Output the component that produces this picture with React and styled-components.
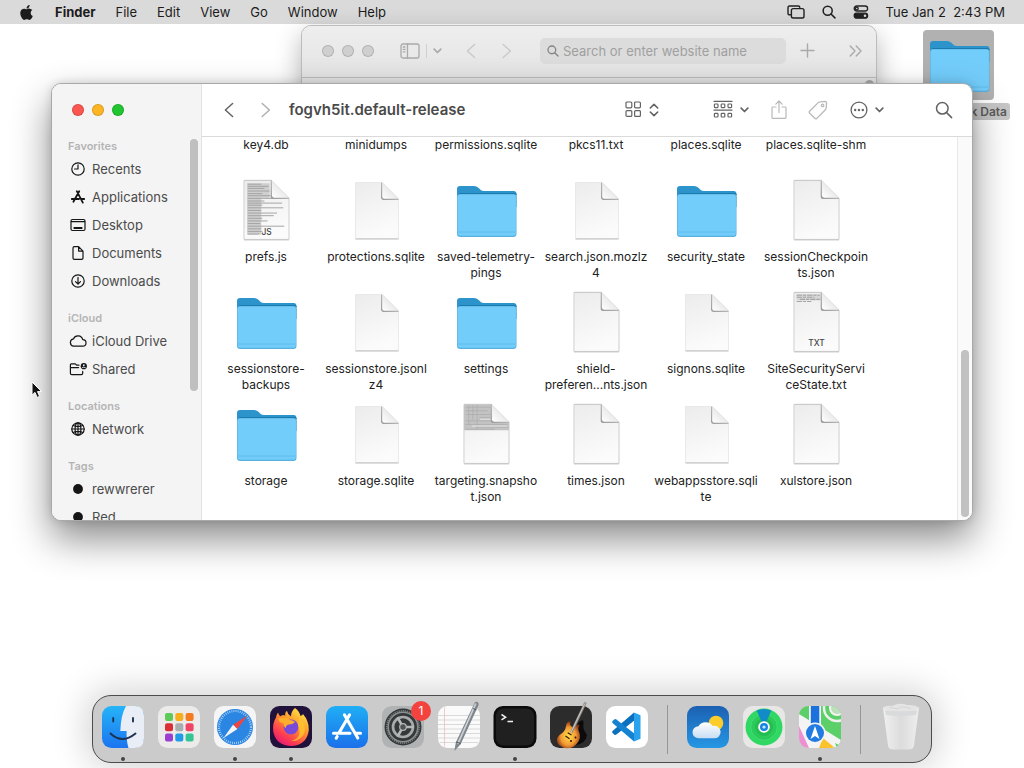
import React from "react";
import styled, { createGlobalStyle } from "styled-components";
import { FaApple } from "react-icons/fa";

const GlobalStyle = createGlobalStyle`
  * {
    box-sizing: border-box;
  }

  body {
    margin: 0;
    background: #fff;
    font-family: Inter, "Liberation Sans", sans-serif;
    font-size: 13px;
    color: #222;
  }

  button,
  input {
    font: inherit;
    color: inherit;
    border: 0;
    padding: 0;
    background: none;
  }

  svg {
    display: block;
    flex-shrink: 0;
  }
`;

const Desktop = styled.div`
  position: relative;
  display: flex;
  flex-direction: column;
  height: 100vh;
  min-height: 640px;
  overflow: hidden;
`;

/* menu bar */

const MenuBar = styled.header`
  display: flex;
  align-items: center;
  justify-content: space-between;
  height: 24px;
  padding: 0 19px 0 18px;
  background: #dadada;
`;

const Menus = styled.nav`
  display: flex;
  align-items: center;
  gap: 20px;
`;

const MenuButton = styled.button`
  color: #1c1c1c;
  font-weight: ${(p) => (p.$bold ? 700 : 400)};
  line-height: 24px;
  white-space: pre;
`;

const Status = styled.div`
  display: flex;
  align-items: center;
  gap: 17px;
`;

/* windows */

const Workspace = styled.main`
  position: relative;
  flex: 1;
`;

const Window = styled.section`
  position: absolute;
  border: 1px solid #a9a9a9;
  border-radius: 10px;
  overflow: hidden;
`;

const BrowserWindow = styled(Window)`
  top: 1px;
  left: 301px;
  right: 147px;
  background: #e8e8e8;
  border-color: #bcbcbc;
  box-shadow: 0 10px 26px rgba(0, 0, 0, 0.3);
`;

const BrowserBar = styled.div`
  display: flex;
  align-items: center;
  height: 52px;
  padding: 0 14px 2px 20px;
  color: #a9a9a9;
  background: linear-gradient(#eeeeee, #e4e4e4);
  border-bottom: 1px solid #bdbdbd;
`;

const BrowserPage = styled.div`
  display: flex;
  justify-content: flex-end;
  height: 180px;
  padding: 2px 2px 0;
`;

const BrowserThumb = styled.div`
  width: 9px;
  height: 80px;
  border-radius: 5px;
  background: #aaa;
`;

const SearchField = styled.label`
  display: flex;
  flex: 1;
  align-items: center;
  gap: 4px;
  height: 26px;
  margin: 0 14px 0 28px;
  padding: 0 7px;
  border-radius: 5px;
  background: #dcdcdc;
  color: #858585;

  input {
    flex: 1;
    min-width: 0;
    outline: 0;
  }

  input::placeholder {
    color: #a0a0a0;
    opacity: 1;
  }
`;

const Lights = styled.div`
  display: flex;
  gap: 8px;
`;

const Light = styled.button`
  width: 12px;
  height: 12px;
  border-radius: 50%;
  background: ${(p) => p.$color};
  box-shadow: inset 0 0 0 1px rgba(0, 0, 0, 0.14);
`;

const IconButton = styled.button`
  display: flex;
  align-items: center;
  gap: ${(p) => p.$gap || 0}px;
  margin-left: ${(p) => p.$before || 0}px;
  color: ${(p) => p.$color || "inherit"};
`;

const FinderWindow = styled(Window)`
  top: 59px;
  left: 51px;
  right: 51px;
  display: flex;
  background: #fff;
  box-shadow: 0 18px 38px rgba(0, 0, 0, 0.46), 0 0 10px rgba(0, 0, 0, 0.14);
`;

const Sidebar = styled.aside`
  position: relative;
  flex: 0 0 150px;
  contain: size;
  overflow: hidden;
  padding: 20px 0 0 16px;
  background: #f4f4f4;
  border-right: 1px solid #e2e2e2;

  ${Lights} {
    height: 20px;
    padding-left: 4px;
  }
`;

const SidebarHeading = styled.h2`
  height: 32px;
  margin: 0;
  padding-top: 14px;
  font-size: 11px;
  font-weight: 600;
  line-height: 16px;
  color: #b4b4b4;
`;

const SidebarItem = styled.a`
  display: flex;
  align-items: center;
  gap: 4px;
  height: 28px;
  padding-bottom: 2px;
  color: #4b4b4b;
  text-decoration: none;

  svg {
    color: #151515;
  }
`;

const SidebarThumb = styled.div`
  position: absolute;
  top: 55px;
  right: 3px;
  width: 8px;
  height: 252px;
  border-radius: 4px;
  background: #bfbfbf;
`;

const FinderMain = styled.div`
  display: flex;
  flex: 1;
  flex-direction: column;
  min-width: 0;
`;

const FinderBar = styled.div`
  display: flex;
  align-items: center;
  height: 53px;
  padding: 0 19px 1px 18px;
  color: #636363;
  border-bottom: 1px solid #dadada;

  h1 {
    flex: 1;
    margin: 0 0 0 18px;
    font-size: 15px;
    font-weight: 600;
    color: #4a4a4a;
    white-space: nowrap;
  }
`;

const Pane = styled.div`
  display: flex;
  justify-content: space-between;
`;

const FileGrid = styled.div`
  display: grid;
  flex: 1;
  grid-template-columns: repeat(auto-fill, 110px);
  row-gap: 8px;
  padding: 0 0 15px 9px;
`;

const File = styled.figure`
  display: flex;
  flex-direction: column;
  align-items: center;
  gap: 8px;
  margin: 0;

  figcaption {
    height: 32px;
    font-size: 12px;
    line-height: 16px;
    text-align: center;
    white-space: pre-line;
    color: #222;
  }
`;

const Track = styled.div`
  display: flex;
  flex: 0 0 15px;
  flex-direction: column;
  justify-content: flex-end;
  padding: 0 3px 3px;
  background: #fafafa;
  border-left: 1px solid #e8e8e8;
`;

const TrackThumb = styled.div`
  height: 44%;
  border-radius: 4px;
  background: #c1c1c1;
`;

const DesktopItem = styled.div`
  position: absolute;
  top: 6px;
  right: 14px;
  display: flex;
  flex-direction: column;
  align-items: center;
  gap: 3px;
`;

const DesktopIcon = styled.div`
  padding: 2px 3px 4px 4px;
  border-radius: 4px;
  background: #b1b1b1;
`;

const DesktopLabel = styled.span`
  width: 104px;
  padding: 0 3px;
  border-radius: 3px;
  background: #c6c6c6;
  color: #5c5c5c;
  font-size: 12px;
  font-weight: 600;
  line-height: 17px;
  text-align: right;
`;

const Pointer = styled.svg`
  position: absolute;
  top: 357px;
  left: 31px;
`;

/* dock */

const DockArea = styled.footer`
  display: flex;
  justify-content: center;
  padding-bottom: 5px;
`;

const DockBar = styled.div`
  display: flex;
  padding: 0 2px;
  border: 1px solid #4c4c4c;
  border-radius: 19px;
  background: #cbcbcb;
  box-shadow: 0 0 34px 6px rgba(0, 0, 0, 0.17);
`;

const DockItem = styled.button`
  position: relative;
  display: flex;
  flex-direction: column;
  align-items: center;
  gap: 9px;
  width: 56px;
  padding: 10px 0 1px;

  &::after {
    content: "";
    width: 4px;
    height: 4px;
    border-radius: 50%;
    background: ${(p) => (p.$running ? "#444" : "transparent")};
  }
`;

const Badge = styled.span`
  position: absolute;
  top: 5px;
  right: 0;
  width: 20px;
  border-radius: 50%;
  background: #f4433f;
  color: #fff;
  font-size: 12px;
  line-height: 20px;
  text-align: center;
`;

const Divider = styled.div`
  width: 1px;
  margin: 9px 12px 8px;
  background: #969696;
`;

const Line = ({ w = 16, h = w, sw = 1.3, children, ...rest }) => (
  <svg
    width={w}
    height={h}
    viewBox={`0 0 ${w} ${h}`}
    fill="none"
    stroke="currentColor"
    strokeWidth={sw}
    strokeLinecap="round"
    strokeLinejoin="round"
    aria-hidden="true"
    {...rest}
  >
    {children}
  </svg>
);

const Magnifier = ({ size = 18, sw = 1.5 }) => (
  <Line w={18} sw={sw} width={size} height={size}>
    <circle cx="7.3" cy="7.3" r="5.8" />
    <path d="M11.6 11.6 16.6 16.6" />
  </Line>
);

const ChevronDown = () => (
  <Line w={9} h={6} sw={1.7}>
    <path d="M1.2 1.2 4.5 4.5 7.8 1.2" />
  </Line>
);

const Arrow = ({ next }) => (
  <Line w={10} h={16} sw={1.5}>
    <path d={next ? "M1.2 1.5 8.4 8 1.2 14.5" : "M8.6 1.5 1.4 8 8.6 14.5"} />
  </Line>
);

const SideIcon = ({ name }) => {
  const paths = {
    recents: (
      <>
        <circle cx="10" cy="10" r="6.2" />
        <path d="M10 5.8V10H6.6" />
      </>
    ),
    applications: (
      <path
        strokeWidth="1.8"
        d="M8.8 4.2 14.8 15.6M11.2 4.2 5.4 14.8M3.8 12H11M13.2 12H16.2"
      />
    ),
    desktop: (
      <>
        <rect x="3" y="4.5" width="14" height="11" rx="1.5" />
        <path d="M3.4 6.7H16.6" />
        <path strokeWidth="2" d="M6.4 12.9H13.6" />
      </>
    ),
    documents: (
      <path d="M10.6 3.6H6.4Q5 3.6 5 5V15Q5 16.4 6.4 16.4H13.6Q15 16.4 15 15V8.1ZM10.6 3.8V8.1H14.8" />
    ),
    downloads: (
      <>
        <circle cx="10" cy="10" r="6.2" />
        <path d="M10 6.4V13M7.5 10.7 10 13.2 12.5 10.7" />
      </>
    ),
    cloud: (
      <path d="M5.6 15.2H14.6A3.3 3.3 0 0 0 14.8 8.6A5 5 0 0 0 5.4 7.9A3.7 3.7 0 0 0 5.6 15.2Z" />
    ),
    shared: (
      <>
        <path d="M11 6.2H8.6L7.3 4.8H3.3Q2.4 4.8 2.4 5.8V14.2Q2.4 15.6 3.8 15.6H13.3Q14.7 15.6 14.7 14.2V12.4M2.6 8.6H10.6" />
        <circle cx="15.8" cy="7.2" r="3.1" fill="#151515" stroke="none" />
        <circle cx="15.8" cy="6.2" r="0.9" fill="#f4f4f4" stroke="none" />
        <path d="M14.2 8.6Q15.8 7.2 17.4 8.6" stroke="#f4f4f4" strokeWidth="0.9" />
      </>
    ),
    network: (
      <>
        <circle cx="10" cy="10" r="6.2" />
        <ellipse cx="10" cy="10" rx="2.9" ry="6.2" />
        <path d="M10 3.8V16.2M3.8 10H16.2M5.2 6.5Q10 8.6 14.8 6.5M5.2 13.5Q10 11.4 14.8 13.5" />
      </>
    ),
    tag: <circle cx="10" cy="10" r="4.9" fill="currentColor" stroke="none" />,
  };
  return <Line w={20} sw={1.2}>{paths[name]}</Line>;
};

const Folder = () => (
  <svg width="64" height="64" viewBox="0 0 64 64" aria-hidden="true">
    <path
      d="M3 14V12Q3 9 6 9H20Q22.5 9 24.4 10.8L27 13.2Q28 14 30 14H59.5Q62.5 14 62.5 17V30H3Z"
      fill="#2d94cb"
    />
    <path d="M5 17.2Q5 16.5 6 16.5H61Q62 16.5 62.4 18" stroke="#1a79ad" fill="none" />
    <rect x="3" y="17" width="59.5" height="43" rx="3.2" fill="#5ab0dc" />
    <rect x="3.6" y="17.6" width="58.3" height="41.2" rx="2.8" fill="#73cdfb" />
    <path d="M4 55H61.5" stroke="#5bb8ea" strokeWidth="0.8" />
  </svg>
);

const Doc = ({ kind }) => {
  const plain = kind === "plain";
  const code = kind === "js";
  return (
    <svg width="64" height="64" viewBox="0 0 64 64" aria-hidden="true">
      <defs>
        <linearGradient id="paper" x1="0" y1="0" x2="0.3" y2="1">
          <stop offset="0" stopColor="#ececec" />
          <stop offset="1" stopColor="#fbfbfb" />
        </linearGradient>
        <linearGradient id="fold" x1="0" y1="1" x2="1" y2="0">
          <stop offset="0" stopColor="#fff" />
          <stop offset="0.6" stopColor="#e6e6e6" />
        </linearGradient>
        <linearGradient id="crease" x1="1" y1="0" x2="0" y2="1">
          <stop offset="0.2" stopColor="#c8c8c8" />
          <stop offset="1" stopColor="#989898" />
        </linearGradient>
      </defs>
      <g transform={plain ? "translate(11 5)" : "translate(9.5 3) scale(1.045 1.05)"}>
        <path
          d="M0.5 0.5H27L43.5 17V56.5H0.5Z"
          fill="url(#paper)"
          stroke="#e4e4e4"
          strokeWidth="0.8"
        />
        <path d="M0.5 57H43.5" stroke="#b5b5b5" strokeWidth="0.9" />
        {!plain && (
          <>
            <path d="M0.5 0.3H27" stroke="#bdbdbd" strokeWidth="0.8" />
            <path d="M0.4 0.5V56.5M43.6 17V56.5" stroke="#d0d0d0" strokeWidth="0.7" />
          </>
        )}
        {code && (
          <>
            <path d="M3.5 3H25V17H17V52H3.5Z" fill="#cfcfcf" />
            <path
              d="M4 4H17M4 6H24M4 8H20M4 10.5H25M4 13H18M4 15H26M4 17.5H31M4 20H20M4 22H37M4 24H18M4 26.5H38M4 29H17M4 31.5H32M4 34H29M4 36.5H18M4 39H23M4 41.5H16M4 44H39M4 46.5H17M4 49H18M4 51.5H15"
              stroke="#a0a0a0"
              strokeWidth="0.9"
            />
          </>
        )}
        {kind === "snapshot" && (
          <>
            <path d="M0.5 0.5H27V17H43.5V25H0.5Z" fill="#c3c3c3" />
            <path
              d="M2 3H26M2 6.5H23M2 10H26M15 13H26M2 16H26M2 19.5H42M12 22H43M2 24H30M5 1V20M9 1V15M13 1V24"
              stroke="#adadad"
              strokeWidth="0.8"
            />
            <path d="M16 14.5H27M8 21H42" stroke="#eee" strokeWidth="0.8" />
          </>
        )}
        {kind === "txt" && (
          <>
            <path d="M3 2H26V8H3Z" fill="#d6d6d6" />
            <path
              d="M3 3H25M3 5H20M6 7H28M3 9H17"
              stroke="#a5a5a5"
              strokeWidth="1"
              strokeDasharray="5 1 3 1"
            />
          </>
        )}
        <path d="M26 0.5H27L43.5 16.8V18H28.4Q26 18 26 15.6Z" fill="url(#crease)" />
        <path d="M27.2 0.5 43.5 16.8H29.4Q27.2 16.8 27.2 14.6Z" fill="url(#fold)" />
        {(code || kind === "txt") && (
          <text
            x="22"
            y={code ? 52 : 51}
            textAnchor="middle"
            fontSize="8"
            fontWeight="500"
            fill="#444"
          >
            {code ? "JS" : "TXT"}
          </text>
        )}
      </g>
    </svg>
  );
};

const Tile = ({ children }) => (
  <svg width="42" height="42" viewBox="0 0 42 42" overflow="visible" aria-hidden="true">
    {children}
  </svg>
);

const FinderIcon = () => (
  <Tile>
    <defs>
      <linearGradient id="finderBlue" x1="0" y1="0" x2="0" y2="1">
        <stop offset="0" stopColor="#26b4f8" />
        <stop offset="1" stopColor="#1b74f0" />
      </linearGradient>
    </defs>
    <rect width="42" height="42" rx="9.5" fill="url(#finderBlue)" />
    <path
      d="M24 0H32.5Q42 0 42 9.5V32.5Q42 42 32.5 42H26.5Q24.3 35 24.6 25H18.3Q18.8 9 24 0Z"
      fill="#e9edf5"
    />
    <path d="M11.2 12V15.5M31 12V15.5" stroke="#1c3350" strokeWidth="1.9" strokeLinecap="round" />
    <path
      d="M8.5 27.5Q20 38.5 33.5 27.5"
      fill="none"
      stroke="#1c3350"
      strokeWidth="1.9"
      strokeLinecap="round"
    />
  </Tile>
);

const pads = [
  "#5fca58", "#f6ae1c", "#f47b20",
  "#da2f35", "#a9acb0", "#ef4466",
  "#9a3fd0", "#1f9be8", "#34c596",
];

const LaunchpadIcon = () => (
  <Tile>
    <rect width="42" height="42" rx="9.5" fill="#ecebea" />
    {pads.map((c, i) => (
      <rect
        key={c}
        x={7 + (i % 3) * 10.3}
        y={7 + Math.floor(i / 3) * 10.3}
        width="8"
        height="8"
        rx="2"
        fill={c}
      />
    ))}
  </Tile>
);

const SafariIcon = () => (
  <Tile>
    <rect width="42" height="42" rx="9.5" fill="#f5f5f5" />
    <circle cx="21" cy="21" r="18" fill="#2a86e2" />
    <circle
      cx="21"
      cy="21"
      r="16"
      fill="none"
      stroke="#d4e8fb"
      strokeWidth="2.2"
      strokeDasharray="0.7 1.4"
    />
    <path d="M33.5 9.5 23.4 23 19 18.8Z" fill="#f0443f" />
    <path d="M9.3 32.2 19 18.8 23.4 23Z" fill="#f4f4f4" />
  </Tile>
);

const FirefoxIcon = () => (
  <Tile>
    <defs>
      <linearGradient id="foxFire" x1="0.85" y1="0" x2="0.2" y2="1">
        <stop offset="0" stopColor="#fff04a" />
        <stop offset="0.4" stopColor="#ff9a2c" />
        <stop offset="0.75" stopColor="#ff3d50" />
        <stop offset="1" stopColor="#e3147c" />
      </linearGradient>
    </defs>
    <rect width="42" height="42" rx="9.5" fill="#20123a" />
    <path
      d="M25 2Q29 4.7 30.5 10Q33 9 33 8Q39 15 38.8 23.5Q37.5 38.5 22 40Q5.5 39.8 3.2 25Q2.4 17 6 11.5Q6.3 8.8 8 6.5Q8.8 9 10.3 10.2Q14 8 15.2 10Q14.8 5.8 17 5Q17.8 8.8 21 10.5Q21 5 25 2Z"
      fill="url(#foxFire)"
    />
    <circle cx="21" cy="21" r="7.4" fill="#7b49d8" />
    <path
      d="M8.2 12.5Q15 10 20 14Q24 14.4 25 16.2Q22 18.7 18.7 18.5Q15.5 19 16 22Q13.2 21 13.8 17.5Q9 16.8 8.2 12.5Z"
      fill="#ffad2d"
    />
    <path d="M29.5 12Q37 19 34 28Q29 36 21 35Q33 32 28 19Z" fill="#ffc62e" opacity="0.8" />
  </Tile>
);

const AppStoreIcon = () => (
  <Tile>
    <defs>
      <linearGradient id="storeBlue" x1="0" y1="0" x2="0" y2="1">
        <stop offset="0" stopColor="#20aef5" />
        <stop offset="1" stopColor="#1b70ea" />
      </linearGradient>
    </defs>
    <rect width="42" height="42" rx="9.5" fill="url(#storeBlue)" />
    <path
      d="M18.4 8.8 31.8 32M23.6 8.8 12.8 27.2M7.5 27.2H24M30 27.2H34.5M11.2 30.5 10.2 32.2"
      stroke="#fff"
      strokeWidth="3.1"
      strokeLinecap="round"
    />
  </Tile>
);

const SettingsIcon = () => (
  <Tile>
    <rect width="42" height="42" rx="9.5" fill="#b0b3b4" />
    <circle cx="21" cy="21" r="18.5" fill="#35383a" />
    <circle
      cx="21"
      cy="21"
      r="16.2"
      fill="none"
      stroke="#787c7d"
      strokeWidth="1.6"
      strokeDasharray="1.2 0.9"
    />
    <circle cx="21" cy="21" r="14.8" fill="none" stroke="#8b8f90" strokeWidth="1.6" />
    <circle cx="21" cy="21" r="10" fill="none" stroke="#a7abac" strokeWidth="2.7" />
    <path
      d="M21 21H32M21 21 15.5 11.4M21 21 15.5 30.6"
      stroke="#b5b8b9"
      strokeWidth="2.6"
    />
    <circle cx="21" cy="21" r="3.3" fill="#505456" stroke="#b5b8b9" strokeWidth="1.2" />
  </Tile>
);

const TextEditIcon = () => (
  <Tile>
    <rect width="42" height="42" rx="9.5" fill="#fafafa" />
    <path
      d="M0 9.5H42M0 14H42M0 18.5H42M0 23H42M0 27.5H42M0 32H42M2 36.5H40"
      stroke="#d2d2d2"
      strokeWidth="0.8"
    />
    <path d="M6.5 1.5V40.5" stroke="#efbcbc" strokeWidth="0.8" />
    <path d="M37 -4Q41 -5 40.6 -1L22.5 38.5 16.4 45 17.8 36.5Z" fill="#7f868c" />
    <path d="M37.8 -2.5 19.8 37.8" stroke="#ccd2d6" strokeWidth="1.7" />
    <path d="M38.3 4 35.2 2.5M22.5 37.5 18.2 36" stroke="#4e555b" strokeWidth="1" />
  </Tile>
);

const TerminalIcon = () => (
  <Tile>
    <rect x="-0.5" y="0" width="43" height="42" rx="9.5" fill="#0b0b0b" />
    <rect x="2" y="2.4" width="38" height="37" rx="7.5" fill="#202020" />
    <path d="M7.5 8.5 11.6 11.2 7.5 13.9M13.5 15.6H19" fill="none" stroke="#f1f1f1" strokeWidth="1.5" />
  </Tile>
);

const GarageBandIcon = () => (
  <Tile>
    <defs>
      <radialGradient id="guitar" cx="0.5" cy="0.55" r="0.55">
        <stop offset="0" stopColor="#ffdf48" />
        <stop offset="0.6" stopColor="#f39a35" />
        <stop offset="1" stopColor="#8a3413" />
      </radialGradient>
    </defs>
    <rect width="42" height="42" rx="9.5" fill="#2c2c2c" />
    <path d="M28 17Q34 11 33.5 18Q32 22 37 29Q36 37 26 39Z" fill="#0b0b0b" />
    <path
      d="M16 20Q16.5 15 20.5 15.5Q18.7 20 24 22Q26 18 29.5 19Q27 22 29.8 28Q31.2 35.5 23 41Q16 44.5 9 39Q4.5 34 9.5 29Q15.5 25.5 16 20Z"
      fill="url(#guitar)"
    />
    <path d="M21.3 26.5 35.5 -3.5" stroke="#8f8b86" strokeWidth="2.6" />
    <path d="M21 26.5 34.8 -2.5" stroke="#ded8d0" strokeWidth="0.8" />
    <path d="M15.5 30 19.5 32.8M17.7 26.8 21.5 29" stroke="#35180c" strokeWidth="1.2" />
    <circle cx="21" cy="35" r="1" fill="#2b140a" />
    <circle cx="25.5" cy="31.5" r="1" fill="#2b140a" />
  </Tile>
);

const CodeIcon = () => (
  <Tile>
    <rect width="42" height="42" rx="9.5" fill="#fff" />
    <path d="M28 6.5 34.5 9.2V32.8L28 35.5Z" fill="#2aa2ee" />
    <path d="M28 6.5 6.5 25Q5.7 26 6.5 27L8.5 28.8Q9.4 29.3 10.4 28.6L28 14.8Z" fill="#0b70bd" />
    <path d="M28 35.5 6.5 17Q5.7 16 6.5 15L8.5 13.2Q9.4 12.7 10.4 13.4L28 27.2Z" fill="#1683d2" />
  </Tile>
);

const WeatherIcon = () => (
  <Tile>
    <defs>
      <linearGradient id="sky" x1="0" y1="0" x2="0" y2="1">
        <stop offset="0" stopColor="#1c60b2" />
        <stop offset="1" stopColor="#2597e4" />
      </linearGradient>
      <linearGradient id="cloud" x1="0" y1="0" x2="0" y2="1">
        <stop offset="0" stopColor="#fff" />
        <stop offset="1" stopColor="#c7ddf3" />
      </linearGradient>
    </defs>
    <rect width="42" height="42" rx="9.5" fill="url(#sky)" />
    <circle cx="29" cy="17" r="7.3" fill="#fccc2b" />
    <path
      d="M11.5 32.3A6 6 0 0 1 11.5 20.3A8.2 8.2 0 0 1 25.6 20A6.3 6.3 0 1 1 26.5 32.3Z"
      fill="url(#cloud)"
    />
  </Tile>
);

const FindMyIcon = () => (
  <Tile>
    <rect width="42" height="42" rx="9.5" fill="#e9e7e5" />
    <circle cx="21" cy="21" r="18.5" fill="#2fd763" />
    <circle cx="21" cy="21" r="13.3" fill="#2acb5b" stroke="#48de76" strokeWidth="0.8" />
    <circle cx="21" cy="21" r="9" fill="#24bd51" />
    <path d="M21 21 13.7 4.5Q21 1.5 28.3 4.5Z" fill="#128cc9" />
    <circle cx="21" cy="21" r="5.8" fill="#fff" />
    <circle cx="21" cy="21" r="4" fill="#1684e5" />
    <circle cx="21" cy="21" r="1.6" fill="#cfe6fb" />
  </Tile>
);

const MapsIcon = () => (
  <Tile>
    <defs>
      <clipPath id="mapTile">
        <rect width="42" height="42" rx="9.5" />
      </clipPath>
    </defs>
    <g clipPath="url(#mapTile)">
      <rect width="42" height="42" fill="#5cd068" />
      <circle cx="38" cy="2" r="13" fill="none" stroke="#eef0ed" strokeWidth="2.5" />
      <circle cx="38" cy="2" r="7" fill="#bedfba" stroke="#f2f4f2" strokeWidth="2" />
      <path d="M0 8 42 34V42H0Z" fill="#f4f4f4" />
      <path d="M0 20 10 42H0Z" fill="#ed8fd0" />
      <path d="M24 32 36 42H20Z" fill="#fac32d" />
      <path d="M36 37 42 40V42H38Z" fill="#5cd068" />
      <path d="M10 -1H22V20H10Z" fill="#f4f4f4" />
      <path d="M11.8 -1H20.3V20H11.8Z" fill="#1c72dd" />
    </g>
    <circle cx="16" cy="27" r="10.6" fill="#f4f4f4" />
    <circle cx="16" cy="27" r="9" fill="#217be1" />
    <path d="M16 20 20.5 33 16 30 11.5 33Z" fill="#fff" />
  </Tile>
);

const TrashIcon = () => (
  <Tile>
    <defs>
      <linearGradient id="bin" x1="0" y1="0" x2="1" y2="0">
        <stop offset="0" stopColor="#f0f0f0" />
        <stop offset="0.5" stopColor="#dcdcdc" />
        <stop offset="1" stopColor="#eeeeee" />
      </linearGradient>
    </defs>
    <path d="M3 1.5H39L34 39.5Q33.5 43.5 29 43.5H13Q8.5 43.5 8 39.5Z" fill="url(#bin)" />
    <path d="M5 4.5H37L36 9Q21 11 6 9Z" fill="#d8dadb" />
    <path d="M3 2Q5 -1 12 0Q20 -4 27 -1Q36 -1.5 39 2Q37 5 21 5.2Q5 5 3 2Z" fill="#e4e4e4" />
    <path d="M10 1.5 17 2.8 23 0.7 31 2.5" fill="none" stroke="#cfd0d1" strokeWidth="0.8" />
  </Tile>
);

const sections = [
  {
    title: "Favorites",
    items: [
      ["recents", "Recents"],
      ["applications", "Applications"],
      ["desktop", "Desktop"],
      ["documents", "Documents"],
      ["downloads", "Downloads"],
    ],
  },
  {
    title: "iCloud",
    items: [
      ["cloud", "iCloud Drive"],
      ["shared", "Shared"],
    ],
  },
  { title: "Locations", items: [["network", "Network"]] },
  {
    title: "Tags",
    items: [
      ["tag", "rewwrerer"],
      ["tag", "Red"],
    ],
  },
];

const files = [
  [null, "key4.db"],
  [null, "minidumps"],
  [null, "permissions.sqlite"],
  [null, "pkcs11.txt"],
  [null, "places.sqlite"],
  [null, "places.sqlite-shm"],
  ["js", "prefs.js"],
  ["plain", "protections.sqlite"],
  ["folder", "saved-telemetry-\npings"],
  ["plain", "search.json.mozlz\n4"],
  ["folder", "security_state"],
  ["json", "sessionCheckpoin\nts.json"],
  ["folder", "sessionstore-\nbackups"],
  ["plain", "sessionstore.jsonl\nz4"],
  ["folder", "settings"],
  ["json", "shield-\npreferen...nts.json"],
  ["plain", "signons.sqlite"],
  ["txt", "SiteSecurityServi\nceState.txt"],
  ["folder", "storage"],
  ["plain", "storage.sqlite"],
  ["snapshot", "targeting.snapsho\nt.json"],
  ["json", "times.json"],
  ["plain", "webappsstore.sqli\nte"],
  ["json", "xulstore.json"],
];

const dock = [
  { name: "Finder", Icon: FinderIcon, running: true },
  { name: "Launchpad", Icon: LaunchpadIcon },
  { name: "Safari", Icon: SafariIcon, running: true },
  { name: "Firefox", Icon: FirefoxIcon, running: true },
  { name: "App Store", Icon: AppStoreIcon },
  { name: "System Settings", Icon: SettingsIcon, badge: 1 },
  { name: "TextEdit", Icon: TextEditIcon },
  { name: "Terminal", Icon: TerminalIcon, running: true },
  { name: "GarageBand", Icon: GarageBandIcon },
  { name: "Visual Studio Code", Icon: CodeIcon },
  { divider: true },
  { name: "Weather", Icon: WeatherIcon },
  { name: "Find My", Icon: FindMyIcon },
  { name: "Maps", Icon: MapsIcon, running: true },
  { divider: true },
  { name: "Trash", Icon: TrashIcon },
];

const TopMenu = () => (
  <MenuBar>
    <Menus>
      <MenuButton aria-label="Apple">
        <FaApple size={17} />
      </MenuButton>
      <MenuButton $bold>Finder</MenuButton>
      {["File", "Edit", "View", "Go", "Window", "Help"].map((m) => (
        <MenuButton key={m}>{m}</MenuButton>
      ))}
    </Menus>
    <Status>
      <IconButton aria-label="Stage Manager" $color="#222">
        <Line w={18} h={14} sw={1.4}>
          <path d="M3.4 9.8H2.6Q1 9.8 1 8.2V2.6Q1 1 2.6 1H11.2Q12.8 1 12.8 2.4" />
          <rect x="4.4" y="3.6" width="12.6" height="9.4" rx="1.8" />
        </Line>
      </IconButton>
      <IconButton aria-label="Spotlight" $color="#222">
        <Magnifier size={14} sw={2} />
      </IconButton>
      <IconButton aria-label="Control Center" $color="#222">
        <Line w={16} h={14} sw={1.3}>
          <rect x="1.2" y="1" width="13.4" height="5" rx="2.5" />
          <circle cx="3.8" cy="3.5" r="1.4" />
          <rect x="1.2" y="8.2" width="13.4" height="5" rx="2.5" fill="currentColor" />
          <circle cx="12" cy="10.7" r="1.3" fill="#dadada" stroke="none" />
        </Line>
      </IconButton>
      <MenuButton>{"Tue Jan 2  2:43 PM"}</MenuButton>
    </Status>
  </MenuBar>
);

const Browser = () => (
  <BrowserWindow>
    <BrowserBar>
      <Lights>
        {["Close", "Minimize", "Zoom"].map((n) => (
          <Light key={n} aria-label={n} $color="#cfcfcf" />
        ))}
      </Lights>
      <IconButton aria-label="Show sidebar" $before={26} $gap={6}>
        <Line w={20} h={16} sw={1.3}>
          <rect x="1" y="1" width="18" height="14" rx="2" />
          <path d="M7.5 1V15M3.2 4H5M3.2 6.4H5M3.2 8.8H5" />
        </Line>
        <Line w={1} h={14} sw={1}>
          <path d="M0.5 0V14" opacity="0.4" />
        </Line>
        <ChevronDown />
      </IconButton>
      <IconButton aria-label="Back" $before={24} $color="#cacaca">
        <Arrow />
      </IconButton>
      <IconButton aria-label="Forward" $before={26} $color="#cacaca">
        <Arrow next />
      </IconButton>
      <SearchField>
        <Magnifier size={12} sw={2} />
        <input aria-label="Address" placeholder="Search or enter website name" />
      </SearchField>
      <IconButton aria-label="New tab">
        <Line w={15} sw={1.4}>
          <path d="M7.5 1V14M1 7.5H14" />
        </Line>
      </IconButton>
      <IconButton aria-label="More" $before={34}>
        <Line w={13} h={12} sw={1.4}>
          <path d="M1.2 1 6 6 1.2 11M7.2 1 12 6 7.2 11" />
        </Line>
      </IconButton>
    </BrowserBar>
    <BrowserPage>
      <BrowserThumb />
    </BrowserPage>
  </BrowserWindow>
);

const Finder = () => (
  <FinderWindow>
    <Sidebar>
      <Lights>
        <Light aria-label="Close" $color="#fb5750" />
        <Light aria-label="Minimize" $color="#fdb524" />
        <Light aria-label="Zoom" $color="#20c52f" />
      </Lights>
      {sections.map((s) => (
        <nav key={s.title} aria-label={s.title}>
          <SidebarHeading>{s.title}</SidebarHeading>
          {s.items.map(([icon, label]) => (
            <SidebarItem key={label} href="#">
              <SideIcon name={icon} />
              {label}
            </SidebarItem>
          ))}
        </nav>
      ))}
      <SidebarThumb />
    </Sidebar>
    <FinderMain>
      <FinderBar>
        <IconButton aria-label="Back" $before={4}>
          <Arrow />
        </IconButton>
        <IconButton aria-label="Forward" $before={27} $color="#b0b0b0">
          <Arrow next />
        </IconButton>
        <h1>fogvh5it.default-release</h1>
        <IconButton aria-label="View as icons" $gap={7}>
          <Line w={17} sw={1.2}>
            <rect x="1" y="1" width="5.8" height="5.8" rx="1" />
            <rect x="9.6" y="1" width="5.8" height="5.8" rx="1" />
            <rect x="1" y="9.6" width="5.8" height="5.8" rx="1" />
            <rect x="9.6" y="9.6" width="5.8" height="5.8" rx="1" />
          </Line>
          <Line w={10} h={14} sw={1.6}>
            <path d="M1.3 5 5 1.4 8.7 5M1.3 9 5 12.6 8.7 9" />
          </Line>
        </IconButton>
        <IconButton aria-label="Group" $before={54} $gap={7}>
          <Line w={20} h={19} sw={1.2}>
            <path d="M1 1.4H19M1 10.2H19" />
            <rect x="1.4" y="4" width="3.6" height="3.6" rx="0.8" />
            <rect x="8.2" y="4" width="3.6" height="3.6" rx="0.8" />
            <rect x="15" y="4" width="3.6" height="3.6" rx="0.8" />
            <rect x="1.4" y="13.4" width="3.6" height="3.6" rx="0.8" />
            <rect x="8.2" y="13.4" width="3.6" height="3.6" rx="0.8" />
            <rect x="15" y="13.4" width="3.6" height="3.6" rx="0.8" />
          </Line>
          <ChevronDown />
        </IconButton>
        <IconButton aria-label="Share" $before={22} $color="#b9b9b9">
          <Line w={16} h={20} sw={1.2}>
            <path d="M5 7H1.6Q1 7 1 7.8V17.4Q1 18.4 2 18.4H14Q15 18.4 15 17.4V7.8Q15 7 14.4 7H11M8 12.4V1.2M4.8 4.2 8 1 11.2 4.2" />
          </Line>
        </IconButton>
        <IconButton aria-label="Tags" $before={21} $color="#b9b9b9">
          <Line w={20} sw={1.3}>
            <path d="M1.6 11.2 10.2 2.6Q11 1.8 12.2 1.8L17 1.4Q18.6 1.4 18.6 3L18.2 7.8Q18.2 9 17.4 9.8L8.8 18.4Q7.8 19.2 6.8 18.2L1.7 13.2Q0.7 12.2 1.6 11.2Z" />
            <circle cx="14.6" cy="5.4" r="1.2" />
          </Line>
        </IconButton>
        <IconButton aria-label="Actions" $before={22} $gap={7}>
          <Line w={18} sw={1.3}>
            <circle cx="9" cy="9" r="7.9" />
            <g fill="currentColor" stroke="none">
              <circle cx="5.2" cy="9" r="1.2" />
              <circle cx="9" cy="9" r="1.2" />
              <circle cx="12.8" cy="9" r="1.2" />
            </g>
          </Line>
          <ChevronDown />
        </IconButton>
        <IconButton aria-label="Search" $before={51}>
          <Magnifier />
        </IconButton>
      </FinderBar>
      <Pane>
        <FileGrid>
          {files.map(([kind, name]) => (
            <File key={name}>
              {kind === "folder" && <Folder />}
              {kind && kind !== "folder" && <Doc kind={kind} />}
              <figcaption>{name}</figcaption>
            </File>
          ))}
        </FileGrid>
        <Track>
          <TrackThumb />
        </Track>
      </Pane>
    </FinderMain>
  </FinderWindow>
);

const App = () => (
  <>
    <GlobalStyle />
    <Desktop>
      <TopMenu />
      <Workspace>
        <DesktopItem>
          <DesktopIcon>
            <Folder />
          </DesktopIcon>
          <DesktopLabel>k Data</DesktopLabel>
        </DesktopItem>
        <Browser />
        <Finder />
        <Pointer width="13" height="18" viewBox="0 0 13 18" aria-hidden="true">
          <path
            d="M1 1V14.2L4 11.4 6.1 16.4 8.6 15.4 6.5 10.6H10.6Z"
            fill="#111"
            stroke="#fff"
          />
        </Pointer>
      </Workspace>
      <DockArea>
        <DockBar>
          {dock.map(({ name, Icon, running, badge, divider }, i) =>
            divider ? (
              <Divider key={i} />
            ) : (
              <DockItem key={i} aria-label={name} $running={running}>
                <Icon />
                {badge && <Badge>{badge}</Badge>}
              </DockItem>
            )
          )}
        </DockBar>
      </DockArea>
    </Desktop>
  </>
);

export default App;
